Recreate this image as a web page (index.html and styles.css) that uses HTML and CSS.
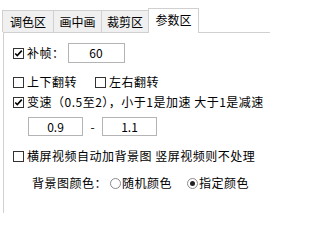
FILE: index.html
```html
<!DOCTYPE html>
<html>
<head>
<meta charset="utf-8">
<link rel="stylesheet" href="styles.css">
</head>
<body>
<div class="tabs">
  <div class="tab t1">调色区</div>
  <div class="tab t2">画中画</div>
  <div class="tab t3">裁剪区</div>
  <div class="tab active">参数区</div>
  <div class="tab-fill"></div>
</div>
<div class="panel">
  <div class="row r1">
    <span class="cb checked"><svg viewBox="0 0 11 11" width="9" height="9"><path d="M1.5 5.5 L4 8 L9.5 2" fill="none" stroke="#000" stroke-width="2"/></svg></span>
    <span class="lbl">补帧：</span>
    <span class="input">60</span>
  </div>
  <div class="row r2">
    <span class="cb"></span>
    <span class="lbl">上下翻转</span>
    <span class="cb cb2"></span>
    <span class="lbl">左右翻转</span>
  </div>
  <div class="row r3">
    <span class="cb checked"><svg viewBox="0 0 11 11" width="9" height="9"><path d="M1.5 5.5 L4 8 L9.5 2" fill="none" stroke="#000" stroke-width="2"/></svg></span>
    <span class="lbl">变速（0.5至2），小于1是加速 大于1是减速</span>
  </div>
  <div class="row r4">
    <span class="input">0.9</span>
    <span class="dash">-</span>
    <span class="input">1.1</span>
  </div>
  <div class="row r5">
    <span class="cb"></span>
    <span class="lbl">横屏视频自动加背景图 竖屏视频则不处理</span>
  </div>
  <div class="row r6">
    <span class="lbl">背景图颜色：</span>
    <span class="radio"></span>
    <span class="lbl">随机颜色</span>
    <span class="radio on r2nd"></span>
    <span class="lbl">指定颜色</span>
  </div>
</div>
</body>
</html>
```
FILE: styles.css
```css
html, body {
  margin: 0;
  padding: 0;
  background: #ffffff;
  width: 270px;
  height: 213px;
  overflow: hidden;
  font-family: "Noto Sans CJK SC", "Noto Sans", sans-serif;
  font-size: 12px;
  color: #000;
}
.tabs {
  display: flex;
  align-items: flex-end;
  padding-left: 2px;
  padding-top: 8px;
  height: 24px;
  position: relative;
  z-index: 2;
}
.tab {
  box-sizing: border-box;
  height: 22px;
  border: 1px solid #d0d0d0;
  border-bottom: none;
  background: #f0f0f0;
  display: flex;
  align-items: center;
  justify-content: center;
  line-height: 1;
  margin-right: -1px;
}
.t1 { width: 52px; }
.t2 { width: 49px; }
.t3 { width: 48px; }
.tab.active {
  width: 51px;
  height: 25px;
  background: #ffffff;
  margin-bottom: -1px;
  padding-bottom: 2px;
  margin-right: 0;
}
.tab-fill { flex: 1; }
.panel {
  box-sizing: border-box;
  margin-left: 3px;
  width: 267px;
  height: 181px;
  border-top: 1px solid #d0d0d0;
  border-left: 1px solid #d0d0d0;
  padding: 9px 0 0 9px;
}
.row {
  display: flex;
  align-items: center;
  white-space: nowrap;
}
.r1 { height: 22px; }
.r2 { height: 20px; margin-top: 8px; }
.r3 { height: 20px; }
.r4 { height: 19px; margin-top: 5px; padding-left: 15px; }
.r5 { height: 20px; margin-top: 10px; }
.r6 { height: 20px; margin-top: 7px; padding-left: 19px; }
.cb {
  box-sizing: border-box;
  width: 11px;
  height: 11px;
  border: 1px solid #333;
  background: #fff;
  display: inline-flex;
  align-items: center;
  justify-content: center;
  margin-right: 3px;
  flex: none;
}
.cb2 { margin-left: 18px; }
.lbl { line-height: 1; letter-spacing: 0.5px; }
.input {
  box-sizing: border-box;
  border: 1px solid #b4b4b4;
  background: #fff;
  display: inline-flex;
  align-items: center;
  justify-content: center;
  height: 20px;
  line-height: 1;
}
.r1 .input { margin-left: 3px; width: 57px; }
.r4 .input { height: 19px; width: 55px; }
.dash { width: 19px; text-align: center; }
.radio {
  box-sizing: border-box;
  width: 11px;
  height: 11px;
  border: 1px solid #8a8a8a;
  border-radius: 50%;
  background: #fff;
  margin: 0 1px 0 3px;
  position: relative;
  flex: none;
}
.radio.on::after {
  content: "";
  position: absolute;
  left: 2px;
  top: 2px;
  width: 5px;
  height: 5px;
  border-radius: 50%;
  background: #222;
}
.r2nd { margin-left: 15px; }
```
